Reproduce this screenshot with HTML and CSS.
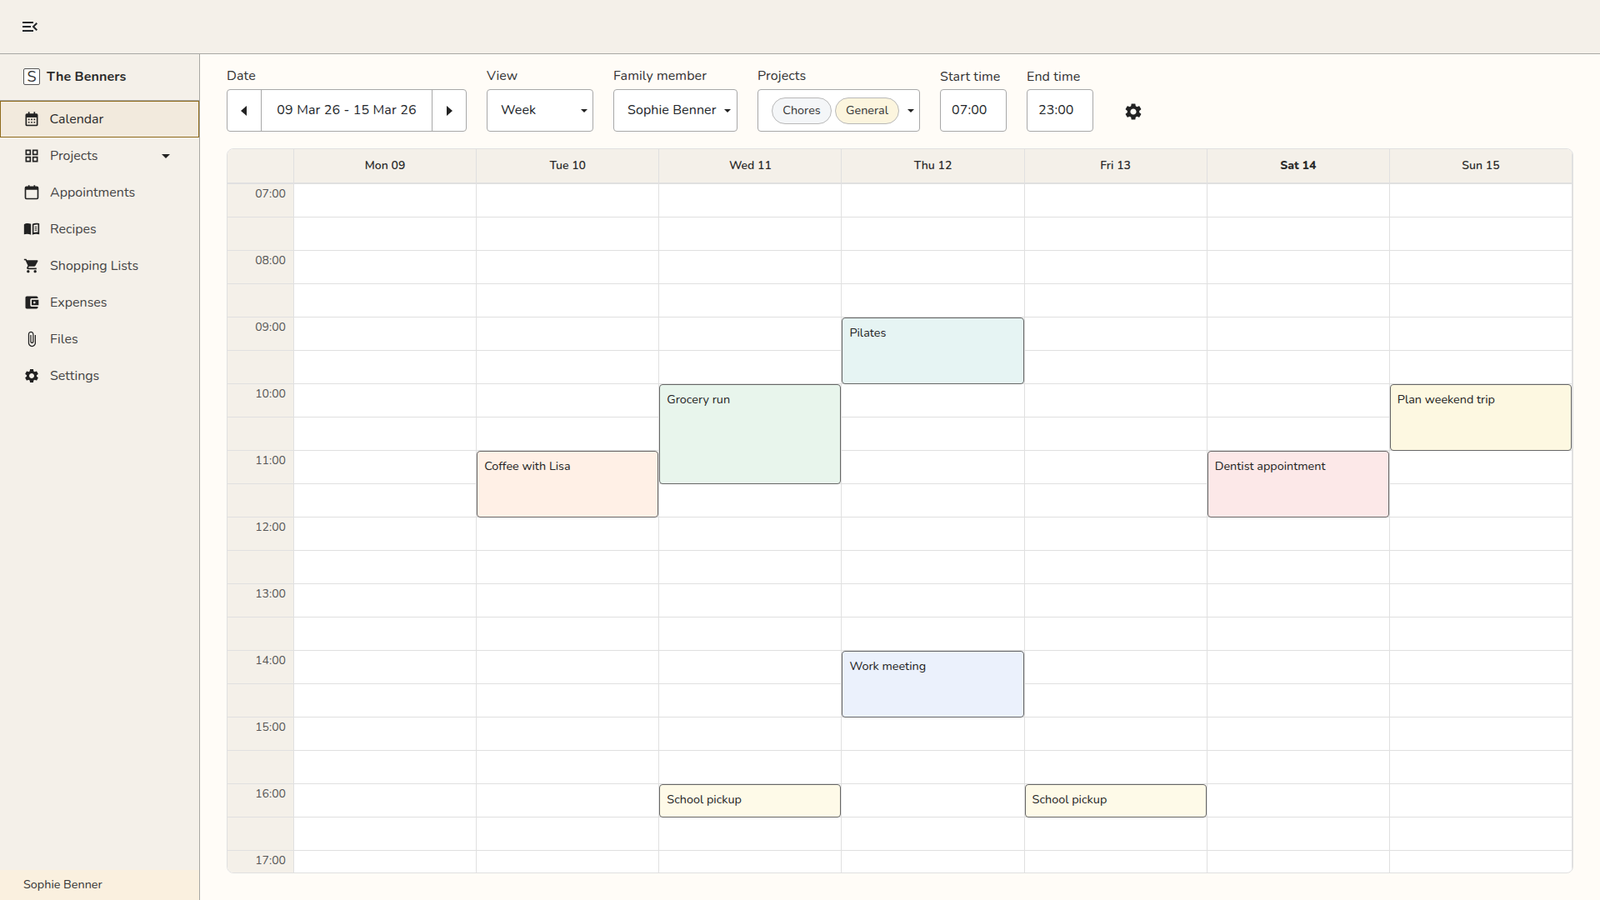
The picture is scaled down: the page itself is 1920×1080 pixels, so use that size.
FILE: index.html
```html
<!DOCTYPE html>
<html lang="en">
<head>
  <meta charset="UTF-8" />
  <meta name="viewport" content="width=device-width, initial-scale=1.0"/>
  <title>The Benners - Calendar</title>
  <link rel="stylesheet" href="styles.css">
</head>
<body>
  <header class="topbar">
    <button class="menu-btn" aria-label="Toggle menu">
      <svg width="24" height="24" viewBox="0 0 24 24"><path d="M3 18h13v-2H3v2zm0-5h10v-2H3v2zm0-7v2h13V6H3zm18 9.59L17.42 12 21 8.41 19.59 7l-5 5 5 5L21 15.59z"/></svg>
    </button>
  </header>

  <div class="layout">
    <aside class="sidebar">
      <div class="brand">
        <span class="brand-logo">S</span>
        <span class="brand-name">The Benners</span>
      </div>

      <nav class="nav">
        <a class="nav-item active">
          <svg class="nav-icon" viewBox="0 0 24 24"><path d="M7 1.500h2V4h6V1.500h2V4h2a2 2 0 0 1 2 2v14a2 2 0 0 1-2 2H5a2 2 0 0 1-2-2V6a2 2 0 0 1 2-2h2z"/><path fill="#f2eadd" d="M5 9.500h14V20H5z"/><path d="M7 11.500h2v2H7zM11 11.500h2v2h-2zM15 11.500h2v2h-2zM7 15.500h2v2H7zM11 15.500h2v2h-2zM15 15.500h2v2h-2z"/></svg>
          <span>Calendar</span>
        </a>
        <a class="nav-item">
          <svg class="nav-icon" viewBox="0 0 24 24"><path d="M3 3h8v8H3zm2 2v4h4V5zM13 3h8v8h-8zm2 2v4h4V5zM3 13h8v8H3zm2 2v4h4v-4zM13 13h8v8h-8zm2 2v4h4v-4z" fill-rule="evenodd"/></svg>
          <span>Projects</span>
          <i class="caret nav-caret"></i>
        </a>
        <a class="nav-item">
          <svg class="nav-icon" viewBox="0 0 24 24"><path fill-rule="evenodd" d="M7 1.500h2V3h6V1.500h2V3h2.500A2.500 2.500 0 0 1 22 5.500v14a2.500 2.500 0 0 1-2.500 2.500h-15A2.500 2.500 0 0 1 2 19.500v-14A2.500 2.500 0 0 1 4.500 3H7zM4 8v11.500a.5.500 0 0 0 .5.500h15a.5.500 0 0 0 .5-.5V8z"/></svg>
          <span>Appointments</span>
        </a>
        <a class="nav-item">
          <svg class="nav-icon" viewBox="0 0 24 24"><g transform="translate(0 -1)"><path d="M1 6c2-1.500 6.500-2 10-.5V21c-3-1.500-7-1.500-10-.5z"/><path fill-rule="evenodd" d="M13 5.500c2.500-1.200 6-1.500 10-.5v15.500c-3-1-7-1-10 .5zM15 7v10.800c1.900-.7 4-.9 6-.6V6.500c-2-.3-4.200-.1-6 .5z"/><path d="M16.500 9h3v1.200h-3zM16.500 11.500h3v1.200h-3zM16.500 14h3v1.200h-3z"/></g></svg>
          <span>Recipes</span>
        </a>
        <a class="nav-item">
          <svg class="nav-icon" viewBox="0 0 24 24"><path d="M7 18c-1.100 0-1.990.9-1.990 2S5.900 22 7 22s2-.9 2-2-.9-2-2-2zM1 2v2h2l3.600 7.590-1.350 2.450c-.16.28-.25.61-.25.96 0 1.100.9 2 2 2h12v-2H7.420c-.14 0-.25-.11-.25-.25l.03-.12.9-1.630h7.450c.75 0 1.410-.41 1.750-1.030l3.580-6.490c.08-.14.12-.31.12-.49 0-.55-.45-1-1-1H5.210l-.94-2H1zm16 16c-1.100 0-1.990.9-1.990 2s.89 2 1.990 2 2-.9 2-2-.9-2-2-2z"/></svg>
          <span>Shopping Lists</span>
        </a>
        <a class="nav-item">
          <svg class="nav-icon" viewBox="0 0 24 24"><path d="M21 18v1c0 1.100-.9 2-2 2H5c-1.110 0-2-.9-2-2V5c0-1.100.89-2 2-2h14c1.100 0 2 .9 2 2v1h-9c-1.110 0-2 .9-2 2v8c0 1.100.89 2 2 2h9zm-9-2h10V8H12v8zm4-2.500c-.83 0-1.500-.67-1.500-1.500s.67-1.500 1.500-1.500 1.500.67 1.500 1.500-.67 1.500-1.500 1.500z"/></svg>
          <span>Expenses</span>
        </a>
        <a class="nav-item">
          <svg class="nav-icon" viewBox="0 0 24 24"><path d="M16.500 6v11.500c0 2.210-1.790 4-4 4s-4-1.790-4-4V5c0-1.380 1.120-2.500 2.500-2.500s2.500 1.120 2.500 2.500v10.500c0 .55-.45 1-1 1s-1-.45-1-1V6H10v9.500c0 1.380 1.120 2.500 2.500 2.500s2.500-1.120 2.500-2.500V5c0-2.210-1.790-4-4-4S7 2.790 7 5v12.500c0 3.040 2.460 5.500 5.500 5.500s5.500-2.460 5.500-5.500V6h-1.500z"/></svg>
          <span>Files</span>
        </a>
        <a class="nav-item">
          <svg class="nav-icon" viewBox="0 0 24 24"><path d="M19.140 12.940c.04-.3.06-.61.06-.94 0-.32-.02-.64-.07-.94l2.030-1.580c.18-.14.23-.41.12-.61l-1.920-3.320c-.12-.22-.37-.29-.59-.22l-2.390.96c-.5-.38-1.030-.7-1.620-.94l-.36-2.540c-.04-.24-.24-.41-.48-.41h-3.840c-.24 0-.43.17-.47.41l-.36 2.540c-.59.24-1.130.57-1.620.94l-2.390-.96c-.22-.08-.47 0-.59.22L2.740 8.870c-.12.21-.08.47.12.61l2.030 1.580c-.05.3-.09.63-.09.94s.02.64.07.94l-2.030 1.580c-.18.14-.23.41-.12.61l1.920 3.320c.12.22.37.29.59.22l2.390-.96c.5.38 1.030.7 1.620.94l.36 2.540c.05.24.24.41.48.41h3.840c.24 0 .44-.17.47-.41l.36-2.540c.59-.24 1.130-.56 1.620-.94l2.390.96c.22.08.47 0 .59-.22l1.920-3.320c.12-.22.07-.47-.12-.61l-2.010-1.580zM12 15.600c-1.980 0-3.600-1.620-3.600-3.600s1.620-3.600 3.600-3.600 3.600 1.620 3.600 3.600-1.620 3.600-3.600 3.600z"/></svg>
          <span>Settings</span>
        </a>
      </nav>

      <div class="sidebar-footer">Sophie Benner</div>
    </aside>

    <main class="main">
      <div class="filters">
        <div class="field">
          <label>Date</label>
          <div class="date-picker control">
            <button class="date-arrow" aria-label="Previous"><i class="tri tri-left"></i></button>
            <span class="date-range">09 Mar 26 - 15 Mar 26</span>
            <button class="date-arrow" aria-label="Next"><i class="tri tri-right"></i></button>
          </div>
        </div>

        <div class="field">
          <label>View</label>
          <div class="control select view-select"><span>Week</span><i class="caret"></i></div>
        </div>

        <div class="field">
          <label>Family member</label>
          <div class="control select member-select"><span>Sophie Benner</span><i class="caret"></i></div>
        </div>

        <div class="field">
          <label>Projects</label>
          <div class="control projects-select">
            <span class="chip chip-chores">Chores</span>
            <span class="chip chip-general">General</span>
            <i class="caret"></i>
          </div>
        </div>

        <div class="field field-time">
          <label>Start time</label>
          <div class="control time-input">07:00</div>
        </div>

        <div class="field field-time">
          <label>End time</label>
          <div class="control time-input">23:00</div>
        </div>

        <button class="gear-btn" aria-label="Calendar settings">
          <svg width="24" height="24" viewBox="0 0 24 24"><path d="M19.140 12.940c.04-.3.06-.61.06-.94 0-.32-.02-.64-.07-.94l2.030-1.580c.18-.14.23-.41.12-.61l-1.920-3.320c-.12-.22-.37-.29-.59-.22l-2.390.96c-.5-.38-1.030-.7-1.620-.94l-.36-2.540c-.04-.24-.24-.41-.48-.41h-3.840c-.24 0-.43.17-.47.41l-.36 2.540c-.59.24-1.130.57-1.620.94l-2.390-.96c-.22-.08-.47 0-.59.22L2.740 8.870c-.12.21-.08.47.12.61l2.030 1.580c-.05.3-.09.63-.09.94s.02.64.07.94l-2.030 1.580c-.18.14-.23.41-.12.61l1.920 3.320c.12.22.37.29.59.22l2.390-.96c.5.38 1.030.7 1.620.94l.36 2.540c.05.24.24.41.48.41h3.840c.24 0 .44-.17.47-.41l.36-2.540c.59-.24 1.130-.56 1.620-.94l2.390.96c.22.08.47 0 .59-.22l1.920-3.320c.12-.22.07-.47-.12-.61l-2.010-1.580zM12 15.600c-1.980 0-3.600-1.620-3.600-3.600s1.620-3.600 3.600-3.600 3.600 1.620 3.600 3.600-1.620 3.600-3.600 3.600z"/></svg>
        </button>
      </div>

      <section class="calendar">
        <div class="cal-head" id="cal-head"></div>
        <div class="cal-body" id="cal-body"></div>
      </section>
    </main>
  </div>

  <script src="script.js"></script>
</body>
</html>
```

FILE: styles.css
```css
* {
  box-sizing: border-box;
}

html, body {
  height: 100%;
  margin: 0;
}

body {
  font-family: "Nunito", "Lato", "Liberation Sans", sans-serif;
  font-size: 16px;
  color: #212529;
  background: #fffcf7;
  display: flex;
  flex-direction: column;
  overflow: hidden;
}

button {
  font: inherit;
  color: inherit;
  background: none;
  border: none;
  padding: 0;
  cursor: pointer;
}

/* top bar */
.topbar {
  flex: 0 0 65px;
  display: flex;
  align-items: center;
  padding: 0 0 1px 24px;
  background: #f4f0e9;
  border-bottom: 1px solid #a8a8a4;
}

.menu-btn {
  display: flex;
  width: 24px;
  height: 24px;
}

.menu-btn path {
  fill: #212529;
}

.layout {
  flex: 1;
  display: flex;
  min-height: 0;
}

/* sidebar */
.sidebar {
  flex: 0 0 240px;
  display: flex;
  flex-direction: column;
  background: #f4f0e9;
  border-right: 1px solid #a8a8a4;
}

.brand {
  height: 56px;
  display: flex;
  align-items: center;
  gap: 8px;
  padding-left: 28px;
  border-bottom: 1px solid #a8a8a4;
}

.brand-logo {
  width: 20px;
  height: 20px;
  margin-top: -2px;
  display: flex;
  align-items: center;
  justify-content: center;
  font-size: 18px;
  line-height: 1;
  color: #333;
  background: #fff;
  border: 1px solid #555;
  border-radius: 2px;
}

.brand-name {
  font-weight: 700;
  color: #2b2b2b;
  letter-spacing: .1px;
  margin-top: -2px;
}

.nav {
  flex: 1;
}

.nav-item {
  height: 44px;
  display: flex;
  align-items: center;
  gap: 12px;
  padding-left: 28px;
  color: #444;
  font-size: 16px;
}

.nav-item.active {
  color: #2b2b2b;
  background: #f2eadd;
  border: 1.500px solid #8f6b1c;
  padding-left: 26.500px;
}

.nav-icon {
  width: 20px;
  height: 20px;
  flex: none;
  fill: #222;
}

.nav-caret {
  margin-left: auto;
  margin-right: 35px;
}

.sidebar-footer {
  height: 36px;
  display: flex;
  align-items: center;
  padding: 0 0 2px 28px;
  font-size: 14.400px;
  color: #333;
  background: #faf0df;
}

.caret {
  display: block;
  flex: none;
  width: 0;
  height: 0;
  border-left: 5px solid transparent;
  border-right: 5px solid transparent;
  border-top: 5px solid #222;
}

/* filters */
.main {
  flex: 1;
  min-width: 0;
  display: flex;
  flex-direction: column;
  padding: 15px 32px 32px;
}

.filters {
  display: flex;
  align-items: flex-end;
  gap: 24px;
  margin-bottom: 20px;
}

.field label {
  display: block;
  line-height: 22px;
  margin-bottom: 5px;
  color: #333;
  letter-spacing: .1px;
}

.field-time label {
  position: relative;
  top: 1px;
}

.control {
  height: 51px;
  display: flex;
  align-items: center;
  padding-bottom: 2px;
  letter-spacing: .1px;
  background: #fff;
  border: 1px solid #a8a8a8;
  border-radius: 4px;
}

.control .caret {
  margin-top: 2px;
  border-left-width: 4px;
  border-right-width: 4px;
  border-top-width: 4px;
}

.date-picker {
  width: 288px;
  padding-bottom: 0;
}

.date-arrow {
  width: 40px;
  height: 100%;
  display: flex;
  align-items: center;
  justify-content: center;
}

.date-range {
  flex: 1;
  height: 100%;
  display: flex;
  align-items: center;
  justify-content: center;
  padding-bottom: 2px;
  letter-spacing: .15px;
  border-left: 1px solid #a8a8a8;
  border-right: 1px solid #a8a8a8;
}

.tri {
  display: block;
  width: 0;
  height: 0;
  border-top: 6.500px solid transparent;
  border-bottom: 6.500px solid transparent;
}

.tri-left {
  margin-right: 2px;
  border-right: 7px solid #222;
}

.tri-right {
  margin-left: 1px;
  border-left: 7px solid #222;
}

.select {
  justify-content: space-between;
  padding-left: 16px;
}

.view-select {
  padding-right: 6px;
  width: 128px;
}

.member-select {
  padding-right: 7px;
  width: 149px;
}

.projects-select {
  width: 195px;
  gap: 4px;
  padding: 0 6px 0 16px;
}

.projects-select .caret {
  margin-left: 6px;
  margin-top: 0;
}

.chip {
  height: 32px;
  display: flex;
  align-items: center;
  justify-content: center;
  padding-bottom: 1px;
  font-size: 14.400px;
  letter-spacing: 0;
  border: 1px solid #b8b8b8;
  border-radius: 16px;
  color: #333;
}

.chip-chores {
  width: 72px;
  background: #f4f6f8;
}

.chip-general {
  width: 77px;
  background: #fcf5de;
}

.time-input {
  width: 80px;
  padding-left: 13px;
}

.gear-btn {
  width: 48px;
  height: 48px;
  display: flex;
  align-items: center;
  justify-content: center;
  fill: #222;
}

/* calendar */
.calendar {
  flex: 1;
  min-height: 0;
  display: flex;
  flex-direction: column;
  background: #fff;
  border: 1px solid #e0e0e0;
  border-radius: 8px;
  overflow: hidden;
}

.cal-head, .cal-body {
  display: grid;
  grid-template-columns: 80px repeat(7, 1fr);
}

.cal-head {
  flex: none;
  height: 42px;
  background: #f4f0e9;
  border-bottom: 2px solid #e0e0e0;
}

.cal-body {
  flex: 1;
  min-height: 0;
  overflow: hidden;
}

.head-cell {
  display: flex;
  align-items: center;
  justify-content: center;
  padding-bottom: 2px;
  font-size: 14px;
  font-weight: 600;
  color: #2b2b2b;
  border-right: 1px solid #e0e0e0;
}

.head-cell.today {
  font-weight: 800;
}

.time-col {
  background: #f4f0e9;
  border-right: 1px solid #e0e0e0;
}

.time-cell {
  height: 40px;
  padding: 2px 9px 0 0;
  text-align: right;
  font-size: 14px;
  line-height: 20px;
  color: #555;
  border-bottom: 1px solid #e0e0e0;
}

.day-col {
  position: relative;
  border-right: 1px solid #e0e0e0;
}

.slot {
  height: 40px;
  border-bottom: 1px solid #e0e0e0;
}

.event {
  position: absolute;
  left: 0;
  right: 0;
  padding: 7px 8px 0;
  font-size: 14.400px;
  line-height: 20px;
  color: #222;
  border: 1px solid #666;
  border-radius: 4px;
}

.event-teal { background: #e6f4f3; }
.event-green { background: #e8f5ec; }
.event-orange { background: #fff0e6; }
.event-red { background: #fce8e8; }
.event-blue { background: #ebf1fc; }
.event-yellow { background: #fefae8; }
.event-gold { background: #fdf8e1; }
```

FILE: script.js
```js
const days = ['Mon 09', 'Tue 10', 'Wed 11', 'Thu 12', 'Fri 13', 'Sat 14', 'Sun 15'];
const startHour = 7;
const lastHour = 18;
const hourHeight = 80;

// day is an index into days, start and length are in hours
const events = [
  { day: 3, start: 9, length: 1, title: 'Pilates', color: 'teal' },
  { day: 2, start: 10, length: 1.5, title: 'Grocery run', color: 'green' },
  { day: 6, start: 10, length: 1, title: 'Plan weekend trip', color: 'gold' },
  { day: 1, start: 11, length: 1, title: 'Coffee with Lisa', color: 'orange' },
  { day: 5, start: 11, length: 1, title: 'Dentist appointment', color: 'red' },
  { day: 3, start: 14, length: 1, title: 'Work meeting', color: 'blue' },
  { day: 2, start: 16, length: 0.5, title: 'School pickup', color: 'yellow' },
  { day: 4, start: 16, length: 0.5, title: 'School pickup', color: 'yellow' }
];

function renderHead() {
  const head = document.getElementById('cal-head');
  head.innerHTML = '<div class="head-cell"></div>';
  days.forEach((day, index) => {
    const cell = document.createElement('div');
    cell.className = 'head-cell';
    if (index === 5) cell.classList.add('today');
    cell.textContent = day;
    head.appendChild(cell);
  });
}

function renderBody() {
  const body = document.getElementById('cal-body');

  const timeCol = document.createElement('div');
  timeCol.className = 'time-col';
  for (let hour = startHour; hour < lastHour; hour++) {
    const label = String(hour).padStart(2, '0') + ':00';
    timeCol.innerHTML += `<div class="time-cell">${label}</div><div class="time-cell"></div>`;
  }
  body.appendChild(timeCol);

  days.forEach((day, index) => {
    const col = document.createElement('div');
    col.className = 'day-col';
    col.innerHTML = '<div class="slot"></div>'.repeat((lastHour - startHour) * 2);

    events.filter(e => e.day === index).forEach(e => {
      const el = document.createElement('div');
      el.className = `event event-${e.color}`;
      el.style.top = (e.start - startHour) * hourHeight + 'px';
      el.style.height = e.length * hourHeight + 'px';
      el.textContent = e.title;
      col.appendChild(el);
    });

    body.appendChild(col);
  });
}

renderHead();
renderBody();
```
